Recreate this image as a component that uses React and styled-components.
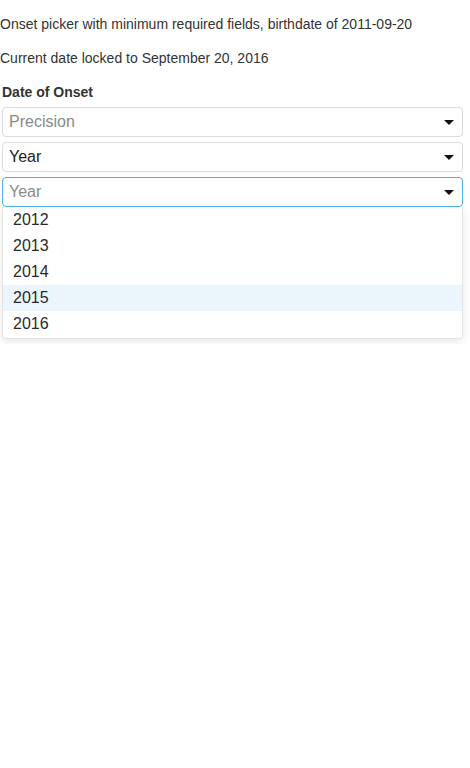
import React from 'react'
import styled, { createGlobalStyle } from 'styled-components'

const GlobalStyle = createGlobalStyle`
  body {
    margin: 0;
    background: #fff;
    font-family: "Liberation Sans", Arial, sans-serif;
    color: #333;
  }
`

const Note = styled.p`
  font-size: 14px;
  line-height: 20px;
  margin: 14px 0;
  color: #333;
`

const Form = styled.div`
  padding: 0 7px 0 2px;
`

const Label = styled.div`
  font-size: 14px;
  line-height: 20px;
  font-weight: bold;
  color: #333;
  margin-bottom: 5px;
`

const Field = styled.div`
  margin-bottom: 5px;
`

const Control = styled.div`
  display: flex;
  align-items: center;
  justify-content: space-between;
  box-sizing: border-box;
  height: 30px;
  padding: 0 8px 0 6px;
  border: 1px solid ${(p) => (p.$focused ? '#4fb0ea' : '#dcdcdc')};
  border-radius: 4px;
  background: #fff;
  font-size: 16px;
  color: ${(p) => (p.$empty ? '#8a8a8a' : '#222')};
`

const Arrow = styled.span`
  width: 0;
  height: 0;
  border-left: 5px solid transparent;
  border-right: 5px solid transparent;
  border-top: 5px solid #111;
  margin-top: 1px;
`

const Menu = styled.div`
  background: #fff;
  border: 1px solid #e3e3e3;
  border-top: none;
  border-radius: 0 0 4px 4px;
  padding-bottom: 1px;
  box-shadow: 0 3px 8px rgba(0, 0, 0, 0.09);
`

const Item = styled.div`
  height: 26px;
  line-height: 26px;
  padding-left: 10px;
  font-size: 16px;
  color: #2a2a2a;
  background: ${(p) => (p.$active ? '#ebf5fc' : '#fff')};
`

const Select = ({ value, placeholder, focused, children }) => (
  <Field>
    <Control $focused={focused} $empty={!value}>
      <span>{value || placeholder}</span>
      <Arrow />
    </Control>
    {children}
  </Field>
)

const years = ['2012', '2013', '2014', '2015', '2016']

export default function App() {
  return (
    <>
      <GlobalStyle />
      <Note>Onset picker with minimum required fields, birthdate of 2011-09-20</Note>
      <Note>Current date locked to September 20, 2016</Note>
      <Form>
        <Label>Date of Onset</Label>
        <Select placeholder="Precision" />
        <Select value="Year" />
        <Select placeholder="Year" focused>
          <Menu>
            {years.map((y) => (
              <Item key={y} $active={y === '2015'}>
                {y}
              </Item>
            ))}
          </Menu>
        </Select>
      </Form>
    </>
  )
}
